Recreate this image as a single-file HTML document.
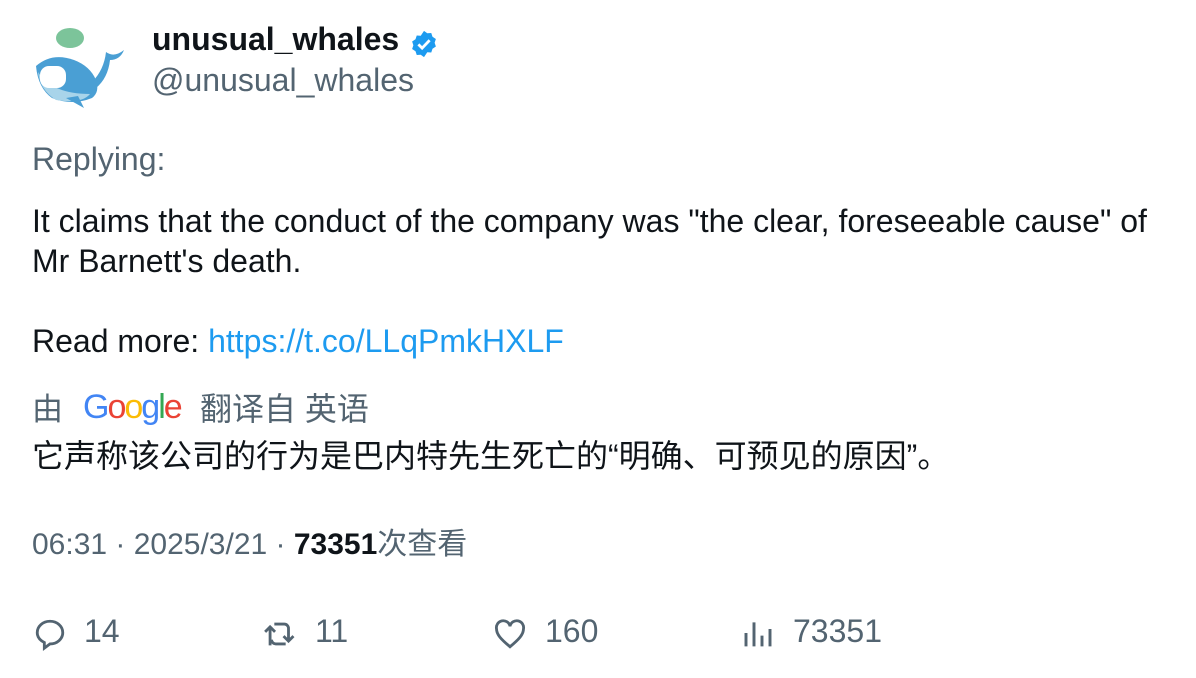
<!DOCTYPE html>
<html><head><meta charset="utf-8"><style>
body{margin:0;background:#fff;width:1196px;height:678px;overflow:hidden;font-family:"Liberation Sans","Noto Sans CJK SC",sans-serif;color:#0f1419;position:relative}
.a{position:absolute;white-space:nowrap}
.g{color:#536471}
</style></head><body>
<svg class="a" style="left:32px;top:26px" width="94" height="84" viewBox="0 0 94 84">
<ellipse cx="38" cy="12" rx="14" ry="10" fill="#7cc49a"/>
<path d="M4 40 Q20 26 42 34 Q58 40 64 54 Q68 66 60 72 Q40 80 20 72 Q6 62 4 40Z" fill="#4a9fd4"/>
<path d="M6 46 Q20 68 58 68 Q50 78 24 74 Q8 64 6 46Z" fill="#a8d4ea"/>
<rect x="8" y="40" width="26" height="22" rx="9" fill="#fff"/>
<path d="M60 56 Q72 44 74 26 Q82 32 92 24 Q88 34 78 34 Q76 52 64 62Z" fill="#4a9fd4"/>
<path d="M34 72 L52 82 L46 70Z" fill="#4a9fd4"/>
</svg>
<div class="a" style="left:152px;top:21px;font-size:32px;font-weight:bold">unusual_whales</div>
<svg class="a" style="left:409px;top:29px" width="30" height="30" viewBox="0 0 24 24"><path d="M12 1.5l2.6 1.9 3.2-.2 1 3 2.7 1.8-1 3 1 3-2.7 1.8-1 3-3.2-.2L12 22.5l-2.6-1.9-3.2.2-1-3-2.7-1.8 1-3-1-3 2.7-1.8 1-3 3.2.2z" fill="#1d9bf0"/><path d="M7.5 12.3l3 3 6-6.3" stroke="#fff" stroke-width="2.2" fill="none"/></svg>
<div class="a g" style="left:152px;top:62px;font-size:32px">@unusual_whales</div>
<div class="a g" style="left:32px;top:141px;font-size:32px">Replying:</div>
<div class="a" style="left:32px;top:201px;font-size:32px;line-height:40px">It claims that the conduct of the company was "the clear, foreseeable cause" of<br>Mr Barnett's death.<br><br>Read more: <span style="color:#1d9bf0">https://t.co/LLqPmkHXLF</span></div>
<div class="a g" style="left:32px;top:384px;font-size:31px">由</div>
<div class="a" style="left:83px;top:388px;font-size:34px;letter-spacing:-2px"><span style="color:#4285f4">G</span><span style="color:#ea4335">o</span><span style="color:#fbbc05">o</span><span style="color:#4285f4">g</span><span style="color:#34a853">l</span><span style="color:#ea4335">e</span></div>
<div class="a g" style="left:200px;top:384px;font-size:32px">翻译自 英语</div>
<div class="a" style="left:32px;top:431px;font-size:32px">它声称该公司的行为是巴内特先生死亡的“明确、可预见的原因”。</div>
<div class="a g" style="left:32px;top:519px;font-size:30px">06:31 · 2025/3/21 · <b style="color:#0f1419">73351</b>次查看</div>
<svg class="a" style="left:33px;top:617px" width="34" height="34" viewBox="0 0 24 24" fill="none" stroke="#536471" stroke-width="2"><path d="M12 3c5 0 9 3.5 9 8s-4 8-9 8l-4 3v-4C5 16.5 3 14 3 11c0-4.5 4-8 9-8z"/></svg>
<div class="a g" style="left:84px;top:613px;font-size:32px">14</div>
<svg class="a" style="left:262px;top:617px" width="36" height="34" viewBox="0 0 24 24" fill="none" stroke="#536471" stroke-width="2"><path d="M5 20V7M1.5 10.5L5 7l3.5 3.5M8 5h7a3 3 0 013 3v9M14.5 13.5L18 17l3.5-3.5M16 19H9a3 3 0 01-3-3"/></svg>
<div class="a g" style="left:315px;top:613px;font-size:32px">11</div>
<svg class="a" style="left:493px;top:617px" width="34" height="34" viewBox="0 0 24 24" fill="none" stroke="#536471" stroke-width="2"><path d="M12 21C6 16 2.5 12.5 2.5 8.5a4.5 4.5 0 019.5-2 4.5 4.5 0 019.5 2c0 4-3.5 7.5-9.5 12.5z"/></svg>
<div class="a g" style="left:545px;top:613px;font-size:32px">160</div>
<svg class="a" style="left:742px;top:617px" width="32" height="32" viewBox="0 0 24 24" stroke="#536471" stroke-width="2.2"><path d="M3 22V12M9 22V4M15 22V14M21 22V9"/></svg>
<div class="a g" style="left:793px;top:613px;font-size:32px">73351</div>
</body></html>
